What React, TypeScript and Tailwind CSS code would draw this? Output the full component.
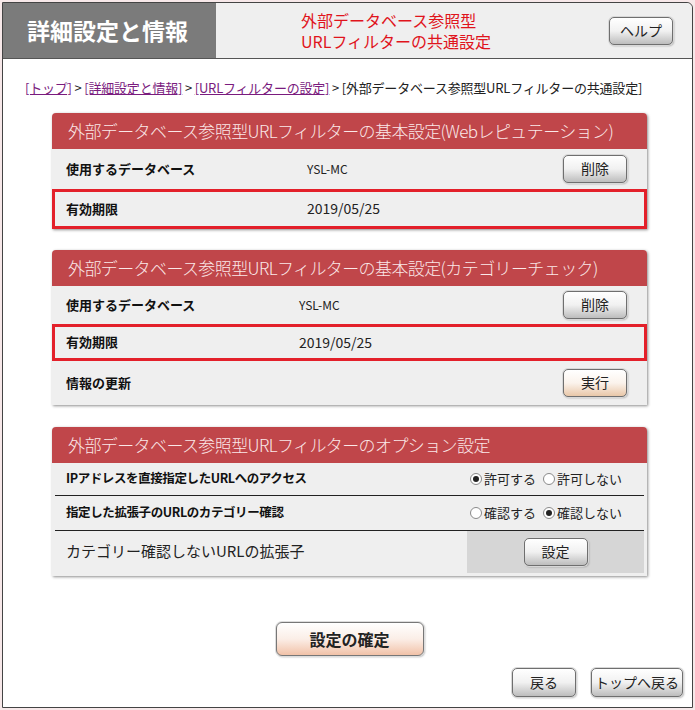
import type { ReactNode } from "react";

const jp = { fontFamily: '"Noto Sans CJK JP", "Liberation Sans", sans-serif' };

function GrayButton({ children, className = "" }: { children: ReactNode; className?: string }) {
  return (
    <button
      className={`flex items-center justify-center rounded-[5px] border border-[#6f6f6f] bg-gradient-to-b from-white via-[#f1f1f1] to-[#bdbdbd] text-[14px] text-[#222] shadow-[0_0_0_1px_#d8d8d8,1px_1px_2px_rgba(0,0,0,0.35)] ${className}`}
    >
      {children}
    </button>
  );
}

function PanelHeader({ title }: { title: string }) {
  return (
    <div className="flex h-[36px] items-center rounded-t-[4px] bg-[#c0464a] pl-[16px] text-[17px] font-light tracking-[-0.6px] text-[#fbe8e8]">
      {title}
    </div>
  );
}

function Radio({ checked, label }: { checked: boolean; label: string }) {
  return (
    <span className="flex items-center gap-[2px] text-[13px] text-[#222]">
      <span className="flex h-[12px] w-[12px] items-center justify-center rounded-full border border-[#8a8a8a] bg-white">
        {checked && <span className="h-[6px] w-[6px] rounded-full bg-[#222]" />}
      </span>
      {label}
    </span>
  );
}

function InfoRow({
  label,
  value,
  labelW,
  small,
  action,
  highlight,
  h,
}: {
  label: string;
  value?: string;
  labelW: string;
  small?: boolean;
  action?: ReactNode;
  highlight?: boolean;
  h: string;
}) {
  return (
    <div
      className={`flex items-center ${h} ${
        highlight ? "border-[3px] border-[#e3202a] pl-[11px]" : "pl-[14px]"
      } pr-[20px]`}
    >
      <span className={`${labelW} text-[13px] font-bold text-[#111]`}>{label}</span>
      {value && <span className={`${small ? "text-[12px]" : "text-[14px]"} text-[#222]`}>{value}</span>}
      {action && <div className="ml-auto">{action}</div>}
    </div>
  );
}

export default function App() {
  return (
    <div className="min-h-[710px] w-[695px] bg-[#f7e8e9] pt-[2px] pl-[2px]" style={jp}>
      <div className="flex h-[706px] w-[691px] flex-col rounded-tr-[6px] border border-[#444] bg-white">
        {/* header */}
        <div className="flex h-[56px] border-b border-[#555]">
          <div className="flex w-[213px] items-center bg-[#7b7b7b] pl-[24px] text-[23px] font-bold text-white">
            詳細設定と情報
          </div>
          <div className="flex flex-1 items-center rounded-tr-[6px] bg-[#efefef] pr-[19px]">
            <div className="flex flex-col gap-[1px] pl-[85px] text-[16px] leading-[20px] text-[#e0141c]">
              <span>外部データベース参照型</span>
              <span>URLフィルターの共通設定</span>
            </div>
            <GrayButton className="ml-auto h-[28px] w-[64px] text-[13px]">ヘルプ</GrayButton>
          </div>
        </div>

        {/* breadcrumb */}
        <div className="mt-[19px] pl-[22px] text-[13px] tracking-[-0.2px] text-[#222]">
          <a className="text-[#7a1b7e] underline">[トップ]</a> &gt;{" "}
          <a className="text-[#7a1b7e] underline">[詳細設定と情報]</a> &gt;{" "}
          <a className="text-[#7a1b7e] underline">[URLフィルターの設定]</a> &gt;
          [外部データベース参照型URLフィルターの共通設定]
        </div>

        {/* panel 1 */}
        <div className="mt-[15px] ml-[49px] w-[595px] rounded-t-[4px] bg-[#efefef] shadow-[1px_1px_3px_rgba(0,0,0,0.45)]">
          <PanelHeader title="外部データベース参照型URLフィルターの基本設定(Webレピュテーション)" />
          <InfoRow
            h="h-[40px]"
            label="使用するデータベース"
            labelW="w-[241px]"
            value="YSL-MC"
            small
            action={<GrayButton className="h-[28px] w-[64px]">削除</GrayButton>}
          />
          <InfoRow h="h-[40px]" highlight label="有効期限" labelW="w-[241px]" value="2019/05/25" />
        </div>

        {/* panel 2 */}
        <div className="mt-[21px] ml-[49px] w-[595px] rounded-t-[4px] bg-[#efefef] shadow-[1px_1px_3px_rgba(0,0,0,0.45)]">
          <PanelHeader title="外部データベース参照型URLフィルターの基本設定(カテゴリーチェック)" />
          <InfoRow
            h="h-[38px]"
            label="使用するデータベース"
            labelW="w-[233px]"
            value="YSL-MC"
            small
            action={<GrayButton className="h-[28px] w-[64px]">削除</GrayButton>}
          />
          <InfoRow h="h-[37px]" highlight label="有効期限" labelW="w-[233px]" value="2019/05/25" />
          <InfoRow
            h="h-[44px]"
            label="情報の更新"
            labelW=""
            action={
              <GrayButton className="h-[28px] w-[64px] to-[#e8c7a8] via-[#fbf3ec]">実行</GrayButton>
            }
          />
        </div>

        {/* panel 3 */}
        <div className="mt-[22px] ml-[49px] w-[595px] rounded-t-[4px] bg-[#efefef] shadow-[1px_1px_3px_rgba(0,0,0,0.45)]">
          <PanelHeader title="外部データベース参照型URLフィルターのオプション設定" />
          <div className="px-[3px] pb-[3px]">
            <div className="flex h-[33px] items-center border-b border-[#222] pl-[11px] pr-[22px]">
              <span className="text-[12.5px] font-bold tracking-[-0.4px] text-[#111]">
                IPアドレスを直接指定したURLへのアクセス
              </span>
              <div className="ml-auto flex gap-[7px]">
                <Radio checked label="許可する" />
                <Radio checked={false} label="許可しない" />
              </div>
            </div>
            <div className="flex h-[35px] items-center border-b border-[#222] pl-[11px] pr-[22px]">
              <span className="text-[12.5px] font-bold tracking-[-0.4px] text-[#111]">
                指定した拡張子のURLのカテゴリー確認
              </span>
              <div className="ml-auto flex gap-[7px]">
                <Radio checked={false} label="確認する" />
                <Radio checked label="確認しない" />
              </div>
            </div>
            <div className="flex h-[42px] items-stretch">
              <div className="flex flex-1 items-center pl-[11px] text-[15px] text-[#222]">
                カテゴリー確認しないURLの拡張子
              </div>
              <div className="flex w-[177px] items-center justify-center bg-[#d6d6d6]">
                <GrayButton className="h-[28px] w-[64px] to-[#9fc9c3] via-[#eef6f5] text-[13px]">設定</GrayButton>
              </div>
            </div>
          </div>
        </div>

        {/* confirm */}
        <div className="mt-[46px] flex justify-center pl-[4px]">
          <button className="flex h-[34px] w-[148px] items-center justify-center rounded-[6px] border border-[#777] bg-gradient-to-b from-white via-[#fbeee7] to-[#f1c2a8] text-[16px] font-bold text-[#222] shadow-[0_0_0_1px_#ddd,1px_1px_2px_rgba(0,0,0,0.35)]">
            設定の確定
          </button>
        </div>

        <div className="mt-[12px] flex justify-end gap-[15px] pr-[9px]">
          <GrayButton className="h-[29px] w-[64px]">戻る</GrayButton>
          <GrayButton className="h-[29px] w-[92px]">トップへ戻る</GrayButton>
        </div>
      </div>
    </div>
  );
}
